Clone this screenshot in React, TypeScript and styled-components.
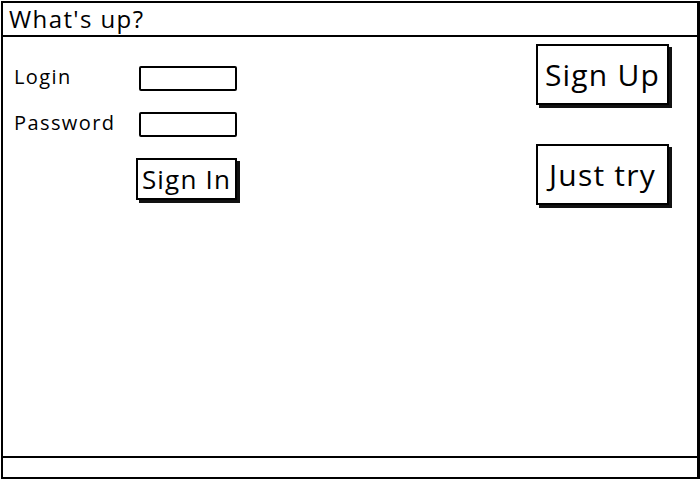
import React from "react";
import styled, { createGlobalStyle } from "styled-components";

const Global = createGlobalStyle`
  html, body { margin: 0; padding: 0; background: #fff; }
  body { font-family: "Open Sans", "Liberation Sans", sans-serif; color: #000; }
`;

const Window = styled.div`
  box-sizing: border-box;
  width: 699px;
  height: 478px;
  margin: 1px 0 0 1px;
  border: 2px solid #000;
  border-right-width: 3px;
  display: flex;
  flex-direction: column;
`;

const TitleBar = styled.div`
  height: 32px;
  border-bottom: 2px solid #000;
  display: flex;
  align-items: center;
  padding-left: 6px;
  font-size: 24px;
  font-weight: 500;
  letter-spacing: 1.4px;
  line-height: 1;
`;

const Body = styled.div`
  flex: 1;
  display: flex;
  justify-content: space-between;
`;

const Form = styled.div`
  display: grid;
  grid-template-columns: 125px 98px;
  grid-auto-rows: 46px;
  align-items: center;
  padding: 18px 0 0 11px;
  align-content: start;
`;

const Label = styled.div`
  font-size: 20px;
  font-weight: 500;
  letter-spacing: 1.4px;
  line-height: 1;
  margin-top: -2px;
`;

const Field = styled.input`
  box-sizing: border-box;
  width: 98px;
  height: 25px;
  border: 2px solid #000;
  border-radius: 2px;
  background: #fff;
  margin: 0;
`;

const Button = styled.button<{ $size: number; $w: number; $h: number }>`
  box-sizing: border-box;
  width: ${(p) => p.$w}px;
  height: ${(p) => p.$h}px;
  border: 2px solid #000;
  background: #fff;
  box-shadow: 3px 3px 0 #111;
  font-family: "Open Sans", "Liberation Sans", sans-serif;
  font-size: ${(p) => p.$size}px;
  font-weight: 500;
  letter-spacing: 1.2px;
  line-height: 1;
  color: #000;
  padding: 0;
  white-space: nowrap;
  cursor: pointer;
`;

const SignInCell = styled.div`
  grid-column: 2;
  margin-left: -3px;
  margin-top: 17px;
`;

const Side = styled.div`
  display: flex;
  flex-direction: column;
  gap: 39px;
  padding: 7px 28px 0 0;
`;

const StatusBar = styled.div`
  height: 19px;
  border-top: 2px solid #000;
`;

export default function App() {
  return (
    <>
      <Global />
      <Window>
        <TitleBar>What's up?</TitleBar>
        <Body>
          <Form>
            <Label>Login</Label>
            <Field type="text" />
            <Label>Password</Label>
            <Field type="password" />
            <SignInCell>
              <Button $size={26} $w={101} $h={42}>Sign In</Button>
            </SignInCell>
          </Form>
          <Side>
            <Button $size={30} $w={133} $h={61}>Sign Up</Button>
            <Button $size={30} $w={133} $h={61}>Just try</Button>
          </Side>
        </Body>
        <StatusBar />
      </Window>
    </>
  );
}
